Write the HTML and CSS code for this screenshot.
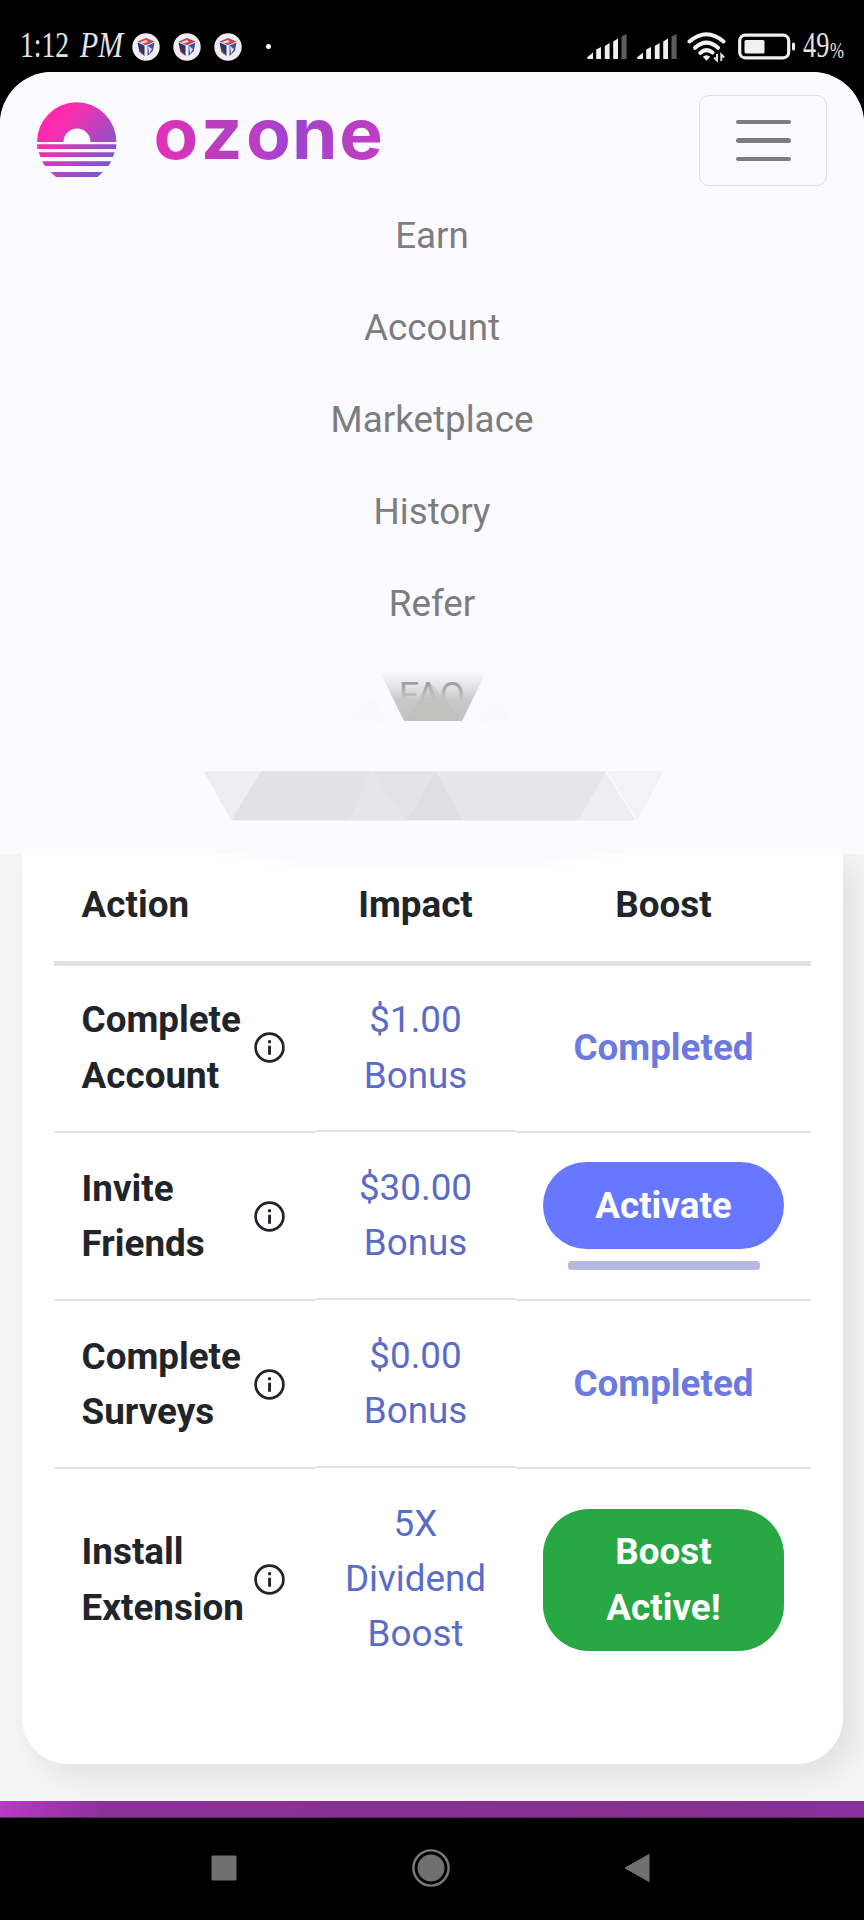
FILE: index.html
```html
<!DOCTYPE html>
<html lang="en">
<head>
<meta charset="utf-8">
<title>Ozone</title>
<link rel="stylesheet" href="styles.css">
</head>
<body>
<svg class="defs" width="0" height="0" aria-hidden="true">
  <defs>
    <linearGradient id="sun" x1="0.2" y1="0.2" x2="0.9" y2="0.8">
      <stop offset="0.1" stop-color="#ff2bac"/><stop offset="1" stop-color="#7c58d0"/>
    </linearGradient>
    <linearGradient id="word" gradientUnits="userSpaceOnUse" x1="0" y1="40" x2="220" y2="20">
      <stop offset="0" stop-color="#e42fb8"/><stop offset="0.3" stop-color="#b53fc0"/><stop offset="0.42" stop-color="#c13cc4"/>
      <stop offset="0.6" stop-color="#9a45d2"/><stop offset="0.8" stop-color="#b340c2"/><stop offset="1" stop-color="#c23cc6"/>
    </linearGradient>
    <linearGradient id="haze" x1="0" y1="0" x2="0" y2="1">
      <stop offset="0" stop-color="#d2d2d2" stop-opacity="0"/><stop offset="0.25" stop-color="#cfcfd0" stop-opacity="0.45"/>
      <stop offset="0.58" stop-color="#c8c8c8" stop-opacity="1"/><stop offset="1" stop-color="#c3c3c2"/>
    </linearGradient>
    <symbol id="info" viewBox="0 0 31 31">
      <circle cx="15.5" cy="15.5" r="13.9" fill="none" stroke="#212529" stroke-width="2.7"/>
      <path d="M14.1 8.2h2.9v3h-2.9zM14.1 13.7h2.9v9h-2.9z" fill="#212529"/>
    </symbol>
    <symbol id="signal" viewBox="0 0 40 26">
      <path d="M0 23.500L6 18.500V25H2Q0 25 0 23.500zM9.200 15.500L14 13V25H9.200zM17.800 12L22.600 9V25H17.800zM26.200 7.500L31 4.500V25H26.200z" fill="#efefef"/>
      <path d="M34.500 2.500L39.600 0V25H34.500z" fill="#5c5c5c"/>
    </symbol>
    <symbol id="badge" viewBox="0 0 28 28">
      <circle cx="14" cy="14" r="13.700" fill="#f1edf3"/>
      <path d="M5.500 8.500L14 5l8.500 3.500-8.500 3.700z" fill="#c8434f"/>
      <path d="M5.500 9.500l7 3v10.500L7.200 18z" fill="#27366f"/>
      <path d="M22.500 9.500l-7 3v10.500l5.300-5z" fill="#3454a5"/>
      <path d="M8 9l6-2 2 2-6 1.500zM16 13l4 3-3 5z" fill="#e8d9ea"/>
      <path d="M7 16l4 5-1 .5-3-3z" fill="#d13c4a"/>
    </symbol>
  </defs>
</svg>

<div class="status">
  <svg class="clock" width="108" height="44" viewBox="0 0 108 44">
    <text x="0" y="32" textLength="49" lengthAdjust="spacingAndGlyphs">1:12</text>
    <text class="script" x="60" y="32" textLength="43" lengthAdjust="spacingAndGlyphs">PM</text>
  </svg>
  <div class="badges">
    <svg width="28" height="28"><use href="#badge"/></svg>
    <svg width="28" height="28"><use href="#badge"/></svg>
    <svg width="28" height="28"><use href="#badge"/></svg>
  </div>
  <span class="dot"></span>
  <div class="indicators">
    <svg width="40" height="26"><use href="#signal"/></svg>
    <svg width="40" height="26"><use href="#signal"/></svg>
    <svg class="wifi" width="39" height="30" viewBox="0 0 39 30">
      <g fill="none" stroke="#f3f3f3" stroke-width="4" stroke-linecap="round">
        <path d="M2.500 9.500Q19.500-5 36.500 9.500"/><path d="M8 15.800Q19.500 5.500 31 15.800"/><path d="M13.200 21Q19.500 15.500 25.500 20.500"/>
      </g>
      <path d="M15.800 24.800q3.700-3.200 7.400 0l-3.700 4z" fill="#f3f3f3"/>
      <path d="M30 22v6.500l-2.800-3M34.300 29v-6.500l2.800 3" fill="none" stroke="#ddd" stroke-width="2"/>
    </svg>
    <svg class="battery" width="58" height="27" viewBox="0 0 58 27">
      <rect x="1.700" y="2.200" width="49" height="22.600" rx="5.500" fill="none" stroke="#f0f0f0" stroke-width="3.200"/>
      <rect x="6.500" y="7" width="20" height="13.500" rx="1.500" fill="#f0f0f0"/>
      <rect x="54" y="9.500" width="3" height="8" rx="1.500" fill="#f0f0f0"/>
    </svg>
    <svg class="percent" width="44" height="44" viewBox="0 0 44 44">
      <text transform="scale(.73 1)" x="0" y="32">49<tspan class="sign" dx="1" dy="1">%</tspan></text>
    </svg>
  </div>
</div>

<main class="screen">
  <header class="navbar">
    <div class="brand-row">
      <a class="brand">
        <svg width="80" height="77" viewBox="0 0 80 77">
          <path d="M0 40A39.700 39.700 0 0 1 79.400 40H53.500A13.300 13.300 0 0 0 26.500 40zM0 42.300H79.400L79 47H.4zM1.700 50.300H77.700L76 55H3.400zM5 59.300H74.400L71.500 64H8zM13.500 70H66L60.500 75H19z" fill="url(#sun)"/>
        </svg>
        <svg class="wordmark" width="234" height="88" viewBox="0 0 234 88">
          <text class="word" transform="scale(1.03 1)" x="-2.500 43.500 87.500 132 178" y="57" fill="url(#word)">ozone</text>
        </svg>
      </a>
      <button class="toggler" aria-label="Menu"><i></i><i></i><i></i></button>
    </div>
    <ul class="menu">
      <li>Earn</li><li>Account</li><li>Marketplace</li><li>History</li><li>Refer</li><li>FAQ</li>
    </ul>
    <svg class="facets" width="520" height="170" viewBox="180 665 520 170">
      <path d="M352 716l18-18 20 26zM475 724l20-26 15 18z" fill="#f8f8fc" opacity=".5"/>
      <path d="M380 672H486L462 721H404z" fill="url(#haze)"/>
      <path d="M432 684L462 721H404z" fill="#bcbcbb" opacity=".45"/>
      <path d="M203 771.500H663L637 821H231z" fill="#eeeef2"/>
      <path d="M261 771.500H606L578 821H231z" fill="#e6e5e9"/>
      <path d="M261 771.500H371L349 821H231z" fill="#e2e1e5"/>
      <path d="M435.500 771.500L463 821H407z" fill="#dfdee2"/>
      <path d="M371 771.500H435L407 821z" fill="#e3e2e6"/>
      <path d="M606 771.500H663L637 821z" fill="#f3f3f7"/>
      <path d="M203 771.500L231 821H637" fill="none" stroke="#fff"/>
      <path d="M606 771.500L637 821" stroke="#fbfbfd" stroke-width="1.500"/>
    </svg>
  </header>

  <section class="page">
    <div class="card">
      <div class="row head">
        <div class="cell action">Action</div><div class="cell impact">Impact</div><div class="cell boost">Boost</div>
      </div>
      <div class="row">
        <div class="cell action"><span>Complete<br>Account</span><svg class="info"><use href="#info"/></svg></div>
        <div class="cell impact">$1.00<br>Bonus</div>
        <div class="cell boost"><span class="done">Completed</span></div>
      </div>
      <div class="row">
        <div class="cell action"><span>Invite<br>Friends</span><svg class="info"><use href="#info"/></svg></div>
        <div class="cell impact">$30.00<br>Bonus</div>
        <div class="cell boost"><button class="btn activate">Activate</button><span class="progress"></span></div>
      </div>
      <div class="row">
        <div class="cell action"><span>Complete<br>Surveys</span><svg class="info"><use href="#info"/></svg></div>
        <div class="cell impact">$0.00<br>Bonus</div>
        <div class="cell boost"><span class="done">Completed</span></div>
      </div>
      <div class="row last">
        <div class="cell action"><span>Install<br>Extension</span><svg class="info"><use href="#info"/></svg></div>
        <div class="cell impact">5X<br>Dividend<br>Boost</div>
        <div class="cell boost"><button class="btn active">Boost<br>Active!</button></div>
      </div>
    </div>
    <div class="footer-band"></div>
  </section>
</main>

<nav class="system">
  <svg width="26" height="40" viewBox="0 0 26 40"><rect x=".5" y="7.500" width="25" height="25" rx="1" fill="#707070"/></svg>
  <svg width="40" height="40" viewBox="0 0 40 40"><circle cx="20" cy="20" r="17.600" fill="none" stroke="#7a7a7a" stroke-width="2.400"/><circle cx="20" cy="20" r="13.500" fill="#707070"/></svg>
  <svg width="26" height="40" viewBox="0 0 26 40"><path d="M1 20L25 6.500V33.500z" fill="#707070" stroke="#707070" stroke-linejoin="round"/></svg>
</nav>
</body>
</html>
```
FILE: styles.css
```css
* { box-sizing: border-box; }
body {
  margin: 0;
  width: 864px;
  height: 1920px;
  overflow: hidden;
  background: #000;
  font-family: Roboto, sans-serif;
  font-size: 36.8px;
  line-height: 55.2px;
  color: #212529;
}
svg { display: block; flex: none; }
.defs { position: absolute; }
button { font: inherit; border: 0; padding: 0; }

/* status bar */
.status {
  display: flex;
  align-items: center;
  height: 72px;
  padding: 21px 17px 0 20px;
}
.status text { font-family: "Liberation Serif", serif; font-size: 36px; fill: #e4e4e4; }
.status .script { font-style: italic; }
.status .sign { font-size: 23px; }
.clock, .percent, .wordmark { overflow: visible; }
.clock { margin-right: 4px; }
.badges { display: flex; gap: 13px; }
.dot { width: 5px; height: 5px; margin-left: 24px; border-radius: 50%; background: #fff; }
.indicators { display: flex; align-items: center; margin-left: auto; }
.indicators svg + svg { margin-left: 10px; }
.indicators .battery { margin-left: 12px; }
.indicators .percent { margin-left: 7px; }

/* page surface */
.screen {
  height: 1746px;
  overflow: hidden;
  border-radius: 52px 52px 0 0;
  background: #f5f5f5;
}
.navbar {
  position: relative;
  z-index: 1;
  height: 782px;
  padding: 23px 37px 0 36px;
  background: #fafaff;
}
.navbar::after {
  content: "";
  position: absolute;
  left: 200px;
  top: 782px;
  width: 440px;
  height: 18px;
  background: radial-gradient(ellipse at 50% 0, #fafaff 40%, rgba(250, 250, 255, 0) 70%);
}
.brand-row { display: flex; justify-content: space-between; height: 95px; }
.brand { display: flex; gap: 39px; padding: 7px 0 0 1px; }
.word {
  font-family: Inter, sans-serif;
  font-weight: 700;
  font-size: 71px;
  line-height: 88px;
}
.toggler {
  display: flex;
  flex-direction: column;
  align-items: center;
  justify-content: center;
  gap: 14px;
  width: 128px;
  height: 91px;
  border: 1px solid #dedee3;
  border-radius: 10px;
  background: none;
}
.toggler i { width: 55px; height: 4.500px; border-radius: 3px; background: #7d7c80; }
.menu { margin: 0 -1px 0 0; padding: 0; list-style: none; text-align: center; color: #7d7d80; }
.menu li { height: 92px; padding-top: 18.400px; }
.facets { position: absolute; left: 180px; top: 593px; }

/* boost table */
.page { height: 964px; display: flex; flex-direction: column; }
.card {
  height: 910px;
  flex: none;
  margin: 0 21px 0 22px;
  padding: 0 32px;
  border-radius: 0 0 46px 46px;
  background: #fff;
  box-shadow: 12px 12px 32px rgba(0, 0, 0, .085);
}
.row {
  display: grid;
  grid-template-columns: 262px 200px 295px;
  height: 168px;
}
.row.head { height: 112px; font-weight: 700; border-bottom: 5px solid #dee0e4; padding-bottom: 6px; }
.row:nth-child(2) { height: 165px; padding-bottom: 2px; }
.row.last { height: 223px; }
.cell {
  display: flex;
  flex-direction: column;
  justify-content: center;
  align-items: center;
  text-align: center;
}
.cell.impact { padding-right: 1px; }
.row:nth-child(n+3) .cell { border-top: 2px solid #e0e2e4; }
.row:nth-child(n+3) .impact { margin-top: -1px; margin-bottom: 1px; }
.cell.action {
  flex-direction: row;
  justify-content: space-between;
  padding: 0 31px 0 27.600px;
  font-weight: 700;
  text-align: left;
}
.row:not(.head) .impact { color: #5a6bc8; }
.info { width: 31px; height: 31px; }
.done { color: #6c7ae0; font-weight: 700; }
.btn { width: 241px; color: #fff; font-weight: 700; }
.activate { height: 87px; border-radius: 44px; background: #6777ff; }
.progress { width: 192px; height: 9px; margin-top: 12px; border-radius: 4px; background: #b5b9e2; }
.active { height: 142px; border-radius: 46px; background: #28a745; }
.footer-band {
  height: 17px;
  margin-top: 37px;
  position: relative;
  background: linear-gradient(90deg, #b83bc4, #8c3099 12%, #85308f 80%, #8a309f);
  border-bottom: 1px solid #4a3050;
}

/* system navigation */
.system {
  display: flex;
  justify-content: space-between;
  align-items: center;
  height: 102px;
  padding: 0 214px 2px 211px;
}
```
